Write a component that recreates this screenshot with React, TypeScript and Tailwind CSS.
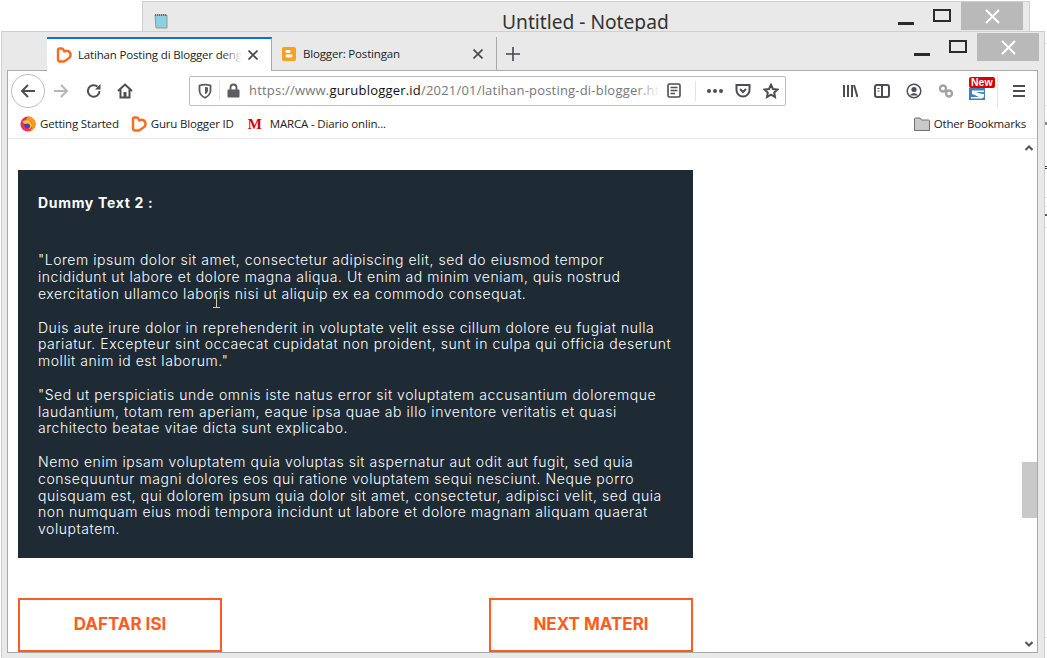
import React from "react";

const paragraphs = [
  [
    '"Lorem ipsum dolor sit amet, consectetur adipiscing elit, sed do eiusmod tempor',
    "incididunt ut labore et dolore magna aliqua. Ut enim ad minim veniam, quis nostrud",
    "exercitation ullamco laboris nisi ut aliquip ex ea commodo consequat.",
  ],
  [
    "Duis aute irure dolor in reprehenderit in voluptate velit esse cillum dolore eu fugiat nulla",
    "pariatur. Excepteur sint occaecat cupidatat non proident, sunt in culpa qui officia deserunt",
    'mollit anim id est laborum."',
  ],
  [
    '"Sed ut perspiciatis unde omnis iste natus error sit voluptatem accusantium doloremque',
    "laudantium, totam rem aperiam, eaque ipsa quae ab illo inventore veritatis et quasi",
    "architecto beatae vitae dicta sunt explicabo.",
  ],
  [
    "Nemo enim ipsam voluptatem quia voluptas sit aspernatur aut odit aut fugit, sed quia",
    "consequuntur magni dolores eos qui ratione voluptatem sequi nesciunt. Neque porro",
    "quisquam est, qui dolorem ipsum quia dolor sit amet, consectetur, adipisci velit, sed quia",
    "non numquam eius modi tempora incidunt ut labore et dolore magnam aliquam quaerat",
    "voluptatem.",
  ],
];

const HeartLogo = () => (
  <svg width="16" height="16" viewBox="0 0 16 16" fill="none" className="shrink-0">
    <path
      d="M2 3 Q2 1.5 3.5 1.5 H5.5 Q7 1.5 7.6 3 L8.3 4.5 Q10 3.3 11.8 4 Q14.6 5 14.6 8 Q14.6 10.5 11 12.5 L8 14.5 H4 Q2 14.5 2 12.5 Z"
      stroke="#ff6a1f"
      strokeWidth="2.4"
      strokeLinejoin="round"
    />
  </svg>
);

const BloggerLogo = () => (
  <svg width="16" height="16" viewBox="0 0 16 16" className="shrink-0">
    <rect x="1" y="1" width="14" height="14" rx="2" fill="#f6a21e" />
    <rect x="4.5" y="4" width="5" height="3" rx="1.4" fill="#fff" />
    <rect x="4.5" y="8.5" width="7" height="3" rx="1.4" fill="#fff" />
  </svg>
);

const FirefoxLogo = () => (
  <svg width="16" height="16" viewBox="0 0 16 16" className="shrink-0">
    <circle cx="8" cy="8" r="7.6" fill="#ee2d5b" />
    <path d="M8 .4 A7.6 7.6 0 0 1 15.6 8 A7.6 7.6 0 0 1 9 15.5 Q13.5 12 11.8 7.5 Q10 4.5 6 4.8 Q6.5 2.5 8 .4Z" fill="#ff9a1f" />
    <circle cx="8" cy="8.5" r="3.8" fill="#4a3fc8" />
    <path d="M2.5 5.5 Q5 3.6 8 4.6 Q12 6 12 9.5 Q11.4 12.8 8 13.4 Q11 11 9.8 8.5 Q7.5 6.8 5 8 Q3.2 7.5 2.5 5.5Z" fill="#ffc928" />
  </svg>
);

const Shield = () => (
  <svg width="14" height="16" viewBox="0 0 14 16" fill="none" stroke="#5b5b60" strokeWidth="1.8">
    <path d="M1.5 2.5 Q7 .8 12.5 2.5 V8 Q12 12.5 7 14.8 Q2 12.5 1.5 8 Z" />
    <path d="M7 4 Q9 4 10 4.6 V8 Q9.6 10.2 7 11.6 Z" fill="#5b5b60" stroke="none" />
  </svg>
);

const Stroke = ({ w = 16, h = 16, children }: { w?: number; h?: number; children: React.ReactNode }) => (
  <svg width={w} height={h} viewBox={`0 0 ${w} ${h}`} fill="none" stroke="#4d4d52" strokeWidth="2" className="shrink-0">
    {children}
  </svg>
);

const WindowControls = () => (
  <div className="flex items-center">
    <div className="mt-[14px] h-[3px] w-[16px] bg-[#2b2b2b]" />
    <div className="ml-[19px] mb-[2px] h-[13px] w-[18px] border-2 border-[#2b2b2b]" />
    <div className="ml-[10px] flex h-[28px] w-[62px] items-center justify-center bg-[#b9b9b9]">
      <svg width="15" height="15" viewBox="0 0 15 15" stroke="#fff" strokeWidth="2">
        <path d="M1 1 L14 14 M14 1 L1 14" />
      </svg>
    </div>
  </div>
);

const CloseTab = () => (
  <svg width="10" height="10" viewBox="0 0 10 10" stroke="#47474c" strokeWidth="1.6" className="shrink-0">
    <path d="M.5 .5 L9.5 9.5 M9.5 .5 L.5 9.5" />
  </svg>
);

export default function App() {
  return (
    <div className="relative h-[658px] w-[1047px] overflow-hidden bg-white font-['Open_Sans',sans-serif]">
      {/* window further behind, only its edge shows */}
      <div className="absolute left-[1045px] top-[43px] flex w-[2px] flex-col">
        <div className="h-px bg-[#dcdcdc]" />
        <div className="mt-[61px] h-px bg-[#dcdcdc]" />
        <div className="mt-[16px] h-[3px] bg-[#888]" />
        <div className="mt-[41px] h-px bg-[#333]" />
        <div className="mt-px h-px bg-[#333]" />
        <div className="mt-[28px] h-px bg-[#dcdcdc]" />
        <div className="mt-[8px] h-px bg-[#dcdcdc]" />
        <div className="mt-[7px] h-[2px] bg-[#555]" />
        <div className="mt-[11px] h-px bg-[#dcdcdc]" />
        <div className="mt-[409px] h-px bg-[#dcdcdc]" />
      </div>
      {/* notepad behind */}
      <div className="absolute left-[142px] top-[1px] flex h-[60px] w-[888px] items-start border border-[#cfcfcf] bg-[#e9e9e9]">
        <svg width="16" height="16" viewBox="0 0 16 16" className="ml-[10px] mt-[11px] shrink-0">
          <path d="M2 2 H14 V15 H3 Z" fill="#8fd0e0" stroke="#9a9a80" />
          <path d="M2 2 H14" stroke="#667" strokeDasharray="1 1" strokeWidth="2" />
        </svg>
        <div className="ml-[333px] mt-[7px] font-['Noto_Sans',sans-serif] text-[19.2px] leading-[26px] text-[#333]">Untitled - Notepad</div>
        <div className="ml-auto mr-[6px]">
          <WindowControls />
        </div>
      </div>
      {/* firefox */}
      <div className="absolute left-[1px] top-[31px] flex h-[640px] w-[1044px] flex-col border border-[#cfcfcf] bg-[#e9e9e9]">
        <div className="flex h-[38px] shrink-0 items-start pl-[45px]">
          <div className="relative z-10 mt-[5px] flex h-[34px] w-[225px] items-center gap-[6px] border-r border-t-2 border-r-[#a9a9a9] border-t-[#0a6fe0] bg-white pl-[9px] pr-[13px]">
            <HeartLogo />
            <span className="relative w-[165px] overflow-hidden whitespace-nowrap text-[11.5px] tracking-[-0.17px] text-[#222]">
              Latihan Posting di Blogger dengan Mudah
              <span className="absolute right-0 top-0 h-full w-[20px] bg-linear-to-r from-transparent to-white" />
            </span>
            <CloseTab />
          </div>
          <div className="mt-[5px] flex h-[33px] w-[225px] items-center gap-[6px] border-r border-[#a9a9a9] pl-[9px] pr-[13px]">
            <BloggerLogo />
            <span className="w-[165px] whitespace-nowrap text-[11.5px] tracking-[-0.17px] text-[#222]">Blogger: Postingan</span>
            <CloseTab />
          </div>
          <svg width="14" height="14" viewBox="0 0 14 14" stroke="#47474c" strokeWidth="1.6" className="ml-[9px] mt-[15px]">
            <path d="M7 0 V14 M0 7 H14" />
          </svg>
          <div className="ml-auto mr-[5px] mt-px">
            <WindowControls />
          </div>
        </div>

        <div className="ml-[5px] mr-[6px] flex h-[583px] shrink-0 flex-col border border-[#a9a9a9] bg-white">
          {/* toolbar */}
          <div className="flex h-[39px] shrink-0 items-center pl-[3px]">
            <div className="flex h-[34px] w-[34px] shrink-0 items-center justify-center rounded-full border border-[#bdbdbd]">
              <Stroke>
                <path d="M15 8 H2 M8 2 L2 8 L8 14" />
              </Stroke>
            </div>
            <div className="ml-[8px] opacity-40">
              <Stroke>
                <path d="M1 8 H14 M8 2 L14 8 L8 14" />
              </Stroke>
            </div>
            <div className="ml-[17px]">
              <Stroke>
                <path d="M13.5 8 A5.8 5.8 0 1 1 11.5 3.6" />
                <path d="M14.5 1 V6.5 H9" fill="#4d4d52" stroke="none" />
              </Stroke>
            </div>
            <div className="ml-[15px]">
              <Stroke>
                <path d="M1 8 L8 1.5 L15 8 M3.5 6.5 V14.5 H12.5 V6.5" />
                <path d="M8 9 V14" strokeWidth="3" />
              </Stroke>
            </div>
            <div className="ml-[56px] flex h-[30px] w-[597px] shrink-0 items-center rounded-[2px] border border-[#bdbdbd] pl-[8px]">
              <Shield />
              <div className="mx-[7px] h-[20px] w-px bg-[#e3e3e3]" />
              <svg width="13" height="15" viewBox="0 0 13 15" className="shrink-0">
                <path d="M3.5 7 V4.5 A3 3 0 0 1 9.5 4.5 V7" fill="none" stroke="#5b5b60" strokeWidth="1.8" />
                <rect x=".5" y="6.5" width="12" height="8" rx="1" fill="#5b5b60" />
              </svg>
              <div className="relative ml-[9px] w-[411px] overflow-hidden whitespace-nowrap pt-px text-[13px] tracking-[0.2px] text-[#77777c]">
                https://www.<span className="text-[#111]">gurublogger.id</span>/2021/01/latihan-posting-di-blogger.html
                <span className="absolute right-0 top-0 h-full w-[24px] bg-linear-to-r from-transparent to-white" />
              </div>
              <svg width="14" height="15" viewBox="0 0 14 15" fill="none" stroke="#4d4d52" strokeWidth="1.6" className="ml-[7px] shrink-0">
                <rect x="1" y="1" width="12" height="13" rx="1.5" />
                <path d="M3.5 4.5 H10.5 M3.5 7.5 H10.5 M3.5 10.5 H8" />
              </svg>
              <div className="ml-[14px] h-[20px] w-px bg-[#e3e3e3]" />
              <div className="ml-[11px] flex gap-[2px]">
                <div className="h-[4px] w-[4px] rounded-full bg-[#4d4d52]" />
                <div className="h-[4px] w-[4px] rounded-full bg-[#4d4d52]" />
                <div className="h-[4px] w-[4px] rounded-full bg-[#4d4d52]" />
              </div>
              <div className="ml-[12px]">
                <Stroke>
                  <path d="M1.5 2 H14.5 V7 A6.5 6.5 0 0 1 1.5 7 Z M5 6 L8 9 L11 6" />
                </Stroke>
              </div>
              <div className="ml-[12px]">
                <Stroke>
                  <path d="M8 1.8 L10 6 L14.5 6.5 L11.2 9.5 L12 14 L8 11.7 L4 14 L4.8 9.5 L1.5 6.5 L6 6 Z" />
                </Stroke>
              </div>
            </div>
            <div className="ml-[56px] flex items-center">
              <Stroke>
                <path d="M2 2 V14 M6 2 V14 M10 2 V14 M12 2 L15.5 14" />
              </Stroke>
              <div className="ml-[16px]">
                <Stroke>
                  <rect x="1" y="2" width="14" height="12" rx="2" />
                  <path d="M8 2 V14" />
                  <path d="M3.5 5.5 H5.5 M3.5 8 H5.5" strokeWidth="1.2" />
                </Stroke>
              </div>
              <div className="ml-[16px]">
                <Stroke>
                  <circle cx="8" cy="8" r="6.8" strokeWidth="1.5" />
                  <circle cx="8" cy="6.5" r="2.6" fill="#4d4d52" stroke="none" />
                  <path d="M3.5 12.5 Q8 7.5 12.5 12.5 Z" fill="#4d4d52" stroke="none" />
                </Stroke>
              </div>
              <div className="ml-[16px]">
                <svg width="16" height="16" viewBox="0 0 16 16" fill="none" stroke="#a3a3a3" strokeWidth="2.4">
                  <circle cx="5" cy="5.5" r="3" />
                  <circle cx="11" cy="10.5" r="3" />
                  <path d="M7 7.5 L9 9" />
                </svg>
              </div>
              <div className="relative ml-[15px] h-[16px] w-[16px]">
                <svg width="16" height="12" viewBox="0 0 16 12" className="mt-[5px]">
                  <rect x="0" y="0" width="16" height="12" fill="#3f82bd" />
                  <path d="M3 2.5 H15 V4 H7 Q11 6 15 6 V8 Q15 10 12 10.5 H2 V9 H10 Q6 7 3 6 Z" fill="#fff" />
                </svg>
                <div className="absolute left-0 top-[-6px] rounded-[2px] bg-[#d90000] px-[2px] font-['Liberation_Sans',sans-serif] text-[10.5px] font-bold leading-[11px] text-white">New</div>
              </div>
              <div className="ml-[12px] h-[32px] w-px bg-[#e3e3e3]" />
              <div className="ml-[15px] flex flex-col gap-[3px]">
                <div className="h-[2px] w-[12px] bg-[#4d4d52]" />
                <div className="h-[2px] w-[12px] bg-[#4d4d52]" />
                <div className="h-[2px] w-[12px] bg-[#4d4d52]" />
              </div>
            </div>
          </div>

          {/* bookmarks */}
          <div className="flex h-[29px] shrink-0 items-center border-b border-[#e5e5e5] pl-[12px] text-[11.5px] tracking-[-0.17px] text-[#222]">
            <FirefoxLogo />
            <span className="ml-[4px] whitespace-nowrap">Getting Started</span>
            <div className="ml-[12px]">
              <HeartLogo />
            </div>
            <span className="ml-[4px] whitespace-nowrap">Guru Blogger ID</span>
            <span className="ml-[14px] font-['Liberation_Serif',serif] text-[15px] font-bold leading-none text-[#d30000]">M</span>
            <span className="ml-[8px] whitespace-nowrap">MARCA - Diario onlin...</span>
            <svg width="16" height="14" viewBox="0 0 16 14" className="ml-auto shrink-0">
              <path d="M.5 2 Q.5 1 1.5 1 H6 L7.5 3 H14.5 Q15.5 3 15.5 4 V13.5 H.5 Z" fill="#c9c9c9" stroke="#6f6f6f" />
            </svg>
            <span className="ml-[4px] mr-[11px] whitespace-nowrap">Other Bookmarks</span>
          </div>

          {/* page */}
          <div className="flex min-h-0 flex-1 overflow-hidden">
            <div className="relative flex-1 pl-[10px] pt-[31px]">
              <div className="h-[388px] w-[675px] bg-[#1e2b35] px-[20px] pt-[25px] font-['Inter',sans-serif] text-[14px] font-light leading-[16.8px] tracking-[0.55px] text-white">
                <div className="font-bold tracking-[0.68px]">Dummy Text 2 :</div>
                <div className="mt-[40.6px] flex flex-col gap-[16.8px]">
                  {paragraphs.map((lines) => (
                    <p key={lines[0]} className="whitespace-nowrap">
                      {lines.map((line) => (
                        <span key={line} className="block">
                          {line}
                        </span>
                      ))}
                    </p>
                  ))}
                </div>
              </div>
              <svg width="7" height="14" viewBox="0 0 7 14" fill="none" stroke="#d8c9a8" className="absolute left-[205px] top-[155px]">
                <path d="M3.5 0 V13 M0 13.5 H7" />
              </svg>
              <div className="mt-[40px] flex w-[675px] justify-between">
                <div className="flex h-[54px] w-[204px] items-center justify-center border-2 border-[#ff5b22] font-['Inter',sans-serif] text-[17px] font-bold text-[#ff5b22]">DAFTAR ISI</div>
                <div className="flex h-[54px] w-[204px] items-center justify-center border-2 border-[#ff5b22] font-['Inter',sans-serif] text-[17px] font-bold text-[#ff5b22]">NEXT MATERI</div>
              </div>
            </div>
            <div className="flex w-[16px] shrink-0 flex-col items-end">
              <svg width="8" height="6" viewBox="0 0 8 6" fill="none" stroke="#555" strokeWidth="2" className="mt-[6px] self-center">
                <path d="M.5 5 L4 1.5 L7.5 5" />
              </svg>
              <div className="mt-[311px] h-[56px] w-[15px] bg-[#c9c9c9]" />
              <svg width="8" height="6" viewBox="0 0 8 6" fill="none" stroke="#555" strokeWidth="2" className="mb-[5px] mt-auto self-center">
                <path d="M.5 1 L4 4.5 L7.5 1" />
              </svg>
            </div>
          </div>
        </div>
      </div>
    </div>
  );
}
